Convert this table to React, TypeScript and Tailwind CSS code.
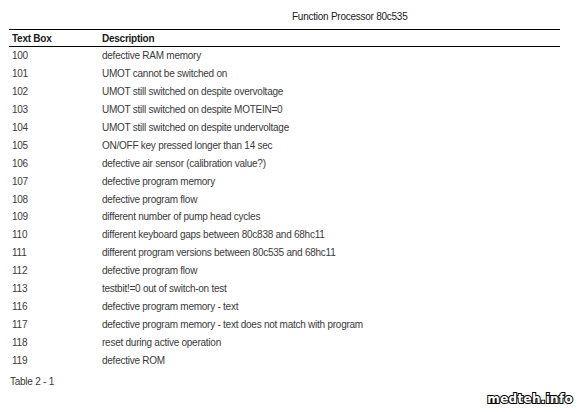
import React from "react";

const rows: [string, string][] = [
  ["100", "defective RAM memory"],
  ["101", "UMOT cannot be switched on"],
  ["102", "UMOT still switched on despite overvoltage"],
  ["103", "UMOT still switched on despite MOTEIN=0"],
  ["104", "UMOT still switched on despite undervoltage"],
  ["105", "ON/OFF key pressed longer than 14 sec"],
  ["106", "defective air sensor (calibration value?)"],
  ["107", "defective program memory"],
  ["108", "defective program flow"],
  ["109", "different number of pump head cycles"],
  ["110", "different keyboard gaps between 80c838 and 68hc11"],
  ["111", "different program versions between 80c535 and 68hc11"],
  ["112", "defective program flow"],
  ["113", "testbit!=0 out of switch-on test"],
  ["116", "defective program memory - text"],
  ["117", "defective program memory - text does not match with program"],
  ["118", "reset during active operation"],
  ["119", "defective ROM"],
];

export default function App() {
  return (
    <div
      className="relative w-[580px] h-[412px] bg-white text-[10px] tracking-[-0.25px] text-[#3a3a3a] overflow-hidden"
      style={{ fontFamily: '"Liberation Sans", Arial, sans-serif' }}
    >
      {/* Title */}
      <div className="h-[29px] pl-[292px] pt-[10px] text-[#1a1a1a] leading-[14px]">
        Function Processor 80c535
      </div>

      {/* Table */}
      <div className="ml-[9px] w-[551px]">
        <div className="flex items-center h-[18px] border-y border-black text-[#1a1a1a] font-bold">
          <div className="w-[93px] pl-[3px]">Text Box</div>
          <div>Description</div>
        </div>
        {rows.map(([code, desc]) => (
          <div key={code} className="flex items-center h-[17.9px]">
            <div className="w-[93px] pl-[3px]">{code}</div>
            <div>{desc}</div>
          </div>
        ))}
      </div>

      <div className="pl-[10px] pt-[6px] leading-[14px]">Table 2 - 1</div>

      {/* Watermark */}
      <div
        className="absolute right-[7px] bottom-[4px] text-[12px] font-bold text-white tracking-[0.3px]"
        style={{
          fontFamily: '"DejaVu Sans", sans-serif',
          WebkitTextStroke: "2px #000",
          paintOrder: "stroke fill",
        }}
      >
        medteh.info
      </div>
    </div>
  );
}
